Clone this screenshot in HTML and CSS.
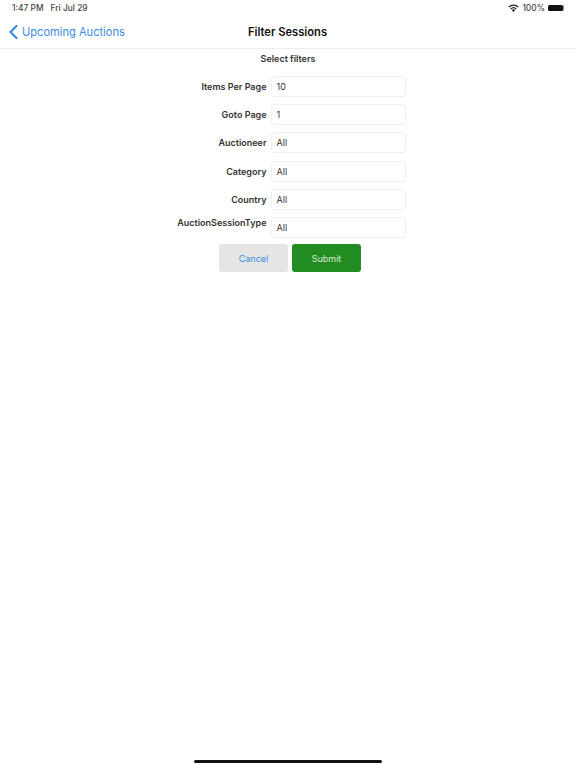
FILE: index.html
```html
<!DOCTYPE html>
<html lang="en">

<head>
    <meta charset="UTF-8">
    <meta name="viewport" content="width=device-width, initial-scale=1.0">
    <title>Filter Sessions</title>
    <link rel="stylesheet" href="styles.css">
</head>

<body>
    <div class="statusBar">
        <span class="clock">1:47 PM</span>
        <span class="date">Fri Jul 29</span>
        <span class="statusRight">
            <svg class="wifi" width="11" height="8" viewBox="0 0 11 8">
                <path d="M5.5 8 3.7 6a2.6 2.6 0 0 1 3.6 0z" fill="#222" />
                <path d="M2.7 5A4.1 4.1 0 0 1 8.3 5" fill="none" stroke="#222" stroke-width="1.2" />
                <path d="M.8 3A6.8 6.8 0 0 1 10.2 3" fill="none" stroke="#222" stroke-width="1.2" />
            </svg>
            <span>100%</span>
            <span class="battery"><span class="batteryFill"></span></span>
        </span>
    </div>

    <div class="navBar">
        <a class="backLink">
            <svg width="9" height="14" viewBox="0 0 9 14">
                <path d="M7.5 1 1.5 7l6 6" fill="none" stroke="#2f86dd" stroke-width="2" stroke-linecap="round" stroke-linejoin="round" />
            </svg>
            <span>Upcoming Auctions</span>
        </a>
        <h1>Filter Sessions</h1>
    </div>

    <div class="content">
        <h2>Select filters</h2>
        <div class="filterRow">
            <label>Items Per Page</label>
            <div class="field">10</div>
        </div>
        <div class="filterRow">
            <label>Goto Page</label>
            <div class="field">1</div>
        </div>
        <div class="filterRow">
            <label>Auctioneer</label>
            <div class="field">All</div>
        </div>
        <div class="filterRow">
            <label>Category</label>
            <div class="field">All</div>
        </div>
        <div class="filterRow">
            <label>Country</label>
            <div class="field">All</div>
        </div>
        <div class="filterRow topLabel">
            <label>AuctionSessionType</label>
            <div class="field">All</div>
        </div>
        <div class="buttons">
            <button class="cancel">Cancel</button>
            <button class="submit">Submit</button>
        </div>
    </div>

    <div class="homeBar"></div>
</body>

</html>
```

FILE: styles.css
```css
body {
    margin: 0;
    height: 768px;
    position: relative;
    overflow: hidden;
    background: #fff;
    font-family: Inter, "Liberation Sans", sans-serif;
    color: #222;
}

.statusBar {
    display: flex;
    align-items: center;
    height: 15px;
    padding: 0 12px;
    font-size: 8.4px;
    font-weight: 500;
    color: #444;
}

.date {
    margin-left: 7px;
}

.statusRight {
    margin-left: auto;
    display: flex;
    align-items: center;
    gap: 3px;
}

.battery {
    width: 16px;
    height: 6px;
    display: block;
    border-right: 1px solid #999;
    box-sizing: border-box;
}

.batteryFill {
    display: block;
    width: 15px;
    height: 6px;
    background: #111;
    border-radius: 1.5px;
}

.navBar {
    display: flex;
    align-items: center;
    justify-content: center;
    position: relative;
    height: 33px;
    border-bottom: 1px solid #ececec;
}

.navBar h1 {
    margin: 0 0 0 -1px;
    font-size: 11.2px;
    font-weight: 600;
    color: #111;
}

.backLink {
    position: absolute;
    left: 9px;
    top: 10px;
    display: flex;
    align-items: center;
    gap: 4px;
    font-size: 11.1px;
    color: #3a8ade;
}

.content {
    display: flex;
    flex-direction: column;
    align-items: center;
}

.content h2 {
    margin: 4px 0 11px;
    height: 12px;
    line-height: 12px;
    font-size: 9px;
    font-weight: 600;
    color: #333;
}

.filterRow {
    display: flex;
    align-items: center;
    width: 576px;
    height: 21px;
    margin-bottom: 7.2px;
}

.filterRow label {
    width: 266.5px;
    text-align: right;
    font-size: 9px;
    font-weight: 600;
    color: #333;
}

.topLabel label {
    align-self: flex-start;
}

.field {
    margin-left: 4.5px;
    width: 135px;
    height: 21px;
    box-sizing: border-box;
    padding-left: 4.5px;
    line-height: 20px;
    font-size: 9px;
    color: #333;
    border: 1px solid #f0f0f0;
    border-radius: 3px;
}

.buttons {
    display: flex;
    gap: 4px;
    margin: -1px 0 0 4px;
}

.buttons button {
    width: 69px;
    height: 28px;
    border: none;
    border-radius: 3px;
    font-family: inherit;
    font-size: 9px;
}

.cancel {
    background: #e5e5e5;
    color: #3a8ade;
}

.submit {
    background: #228b22;
    color: #d8ecd8;
}

.homeBar {
    position: absolute;
    left: 194px;
    bottom: 5px;
    width: 188px;
    height: 3px;
    border-radius: 2px;
    background: #111;
}
```
